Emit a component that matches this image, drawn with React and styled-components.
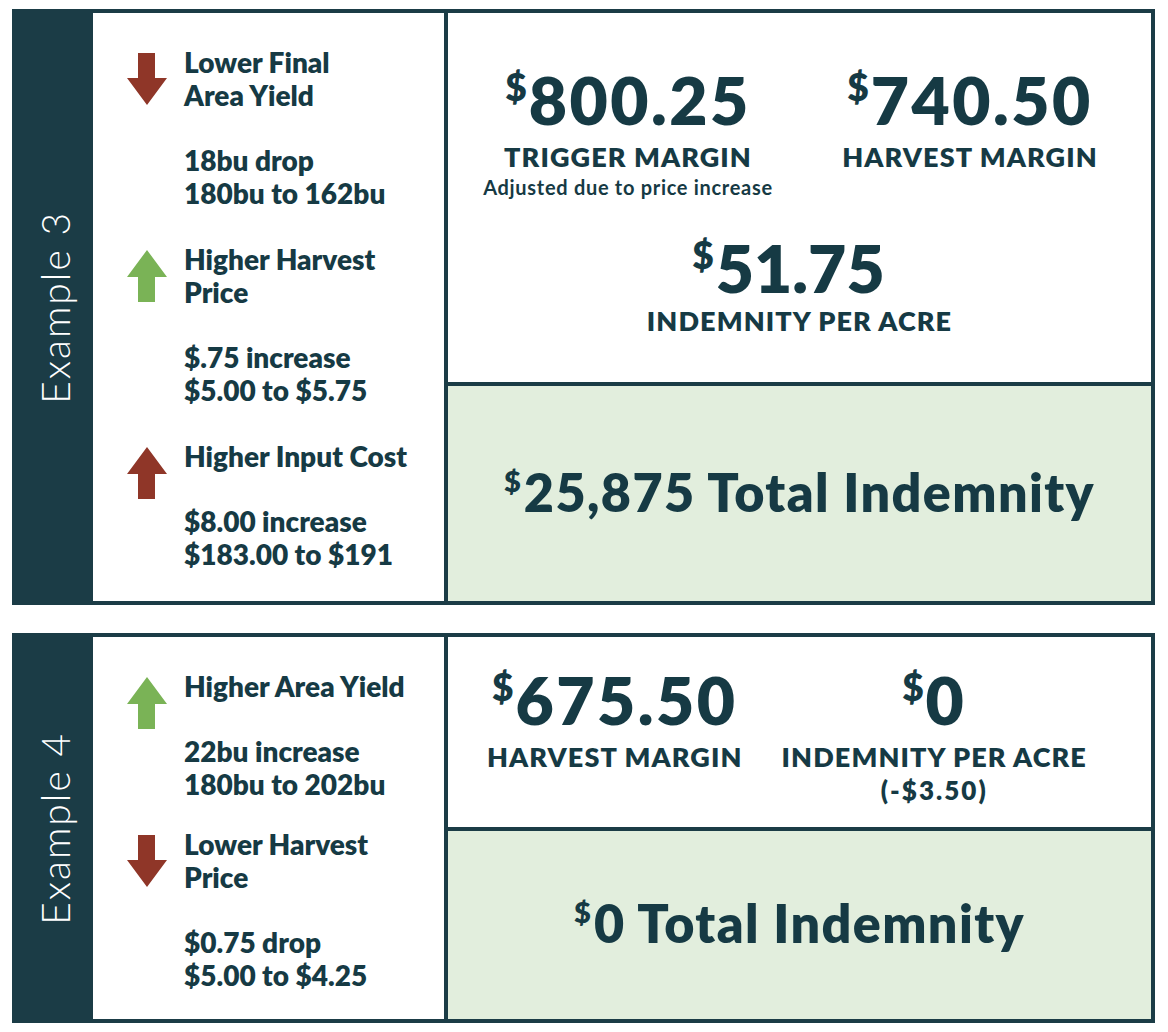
import React from 'react';
import styled, { createGlobalStyle } from 'styled-components';

const C = {
  dark: '#1b3c46',
  text: '#163a44',
  green: '#e2eedd',
  red: '#8f3628',
  up: '#7ab356',
};

const Global = createGlobalStyle`
  html, body { margin: 0; padding: 0; background: #ffffff; }
  body {
    font-family: 'Lato', 'Liberation Sans', sans-serif;
    color: ${C.text};
    -webkit-font-smoothing: antialiased;
  }
`;

const Page = styled.main`
  width: 1143px;
  padding: 9px 13px 9px 12px;
  display: flex;
  flex-direction: column;
  gap: 28px;
`;

const Card = styled.section`
  display: grid;
  grid-template-columns: 77px 351px 707px;
  border: 4px solid ${C.dark};
`;

const Sidebar = styled.div`
  background: ${C.dark};
  display: flex;
  align-items: center;
  justify-content: center;
`;

const SideLabel = styled.span`
  writing-mode: vertical-rl;
  transform: rotate(180deg);
  color: #ffffff;
  font-family: 'Lato', sans-serif;
  font-weight: 300;
  font-size: 39px;
  line-height: 40px;
  letter-spacing: 2px;
  white-space: nowrap;
`;

const Changes = styled.div`
  padding: 33px 0 0 34px;
  display: flex;
  flex-direction: column;
  gap: ${(p) => p.$gap}px;
  background: #ffffff;
`;

const Change = styled.div`
  display: grid;
  grid-template-columns: 40px 1fr;
  column-gap: 17px;
  align-items: start;
`;

const ArrowBox = styled.svg`
  display: block;
  width: 40px;
  height: 52px;
  margin-top: 7px;
`;

const ChangeText = styled.div`
  font-size: 28px;
  line-height: 33px;
  font-weight: 800;
  letter-spacing: 0;
  white-space: nowrap;
`;

const Line = styled.div``;

const Detail = styled.div`
  margin-top: 32px;
`;

const Results = styled.div`
  display: flex;
  flex-direction: column;
  border-left: 4px solid ${C.dark};
`;

const Summary = styled.div`
  box-sizing: border-box;
  height: ${(p) => p.$height}px;
  padding-top: ${(p) => p.$pad}px;
  border-bottom: 4px solid ${C.dark};
  background: #ffffff;
`;

const MetricRow = styled.div`
  display: grid;
  grid-template-columns: 1fr 1fr;
  padding: 0 ${(p) => p.$pr}px 0 ${(p) => p.$pl}px;
`;

const Metric = styled.div`
  display: flex;
  flex-direction: column;
  align-items: center;
  text-align: center;
  white-space: nowrap;
  margin-top: ${(p) => p.$top || 0}px;
`;

const Value = styled.div`
  display: flex;
  align-items: flex-start;
  font-size: 66px;
  line-height: 66px;
  font-weight: 800;
  letter-spacing: ${(p) => p.$ls}px;
  margin-right: ${(p) => p.$shift}px;
`;

const Cur = styled.span`
  font-size: 37px;
  line-height: 37px;
  margin-top: 1px;
  letter-spacing: 0;
  margin-right: 2px;
`;

const Label = styled.div`
  font-size: 27px;
  line-height: 30px;
  font-weight: 800;
  letter-spacing: 1.1px;
  margin-top: ${(p) => p.$gap}px;
`;

const Sub = styled.div`
  font-size: ${(p) => p.$size}px;
  line-height: ${(p) => p.$lh}px;
  font-weight: ${(p) => p.$weight};
  letter-spacing: ${(p) => p.$ls}px;
  margin-top: 3px;
`;

const TotalBox = styled.div`
  height: ${(p) => p.$height}px;
  background: ${C.green};
  display: flex;
  align-items: center;
  justify-content: center;
`;

const Total = styled.div`
  display: flex;
  align-items: flex-start;
  font-size: 52px;
  line-height: 52px;
  font-weight: 800;
  letter-spacing: 1.4px;
  white-space: nowrap;
  margin-top: -4px;
`;

const TotalCur = styled.span`
  font-size: 29px;
  line-height: 29px;
  letter-spacing: 0;
  margin-right: 3px;
`;

function Arrow({ dir }) {
  const down = dir === 'down';
  return (
    <ArrowBox viewBox="0 0 40 52" aria-hidden="true">
      {down ? (
        <polygon fill={C.red} points="11,0 28,0 28,25 40,25 20,52 0,25 11,25" />
      ) : (
        <polygon
          fill={dir === 'up-red' ? C.red : C.up}
          points="20,0 40,27 28,27 28,52 11,52 11,27 0,27"
        />
      )}
    </ArrowBox>
  );
}

function ChangeItem({ dir, title, detail }) {
  return (
    <Change>
      <Arrow dir={dir} />
      <ChangeText>
        {title.map((t) => (
          <Line key={t}>{t}</Line>
        ))}
        <Detail>
          {detail.map((t) => (
            <Line key={t}>{t}</Line>
          ))}
        </Detail>
      </ChangeText>
    </Change>
  );
}

function Money({ amount, ls = 2.5, shift = 0 }) {
  return (
    <Value $ls={ls} $shift={shift}>
      <Cur>$</Cur>
      {amount}
    </Value>
  );
}

export default function App() {
  return (
    <>
      <Global />
      <Page>
        <Card>
          <Sidebar>
            <SideLabel>Example 3</SideLabel>
          </Sidebar>
          <Changes $gap={33}>
            <ChangeItem
              dir="down"
              title={['Lower Final', 'Area Yield']}
              detail={['18bu drop', '180bu to 162bu']}
            />
            <ChangeItem
              dir="up"
              title={['Higher Harvest', 'Price']}
              detail={['$.75 increase', '$5.00 to $5.75']}
            />
            <ChangeItem
              dir="up-red"
              title={['Higher Input Cost']}
              detail={['$8.00 increase', '$183.00 to $191']}
            />
          </Changes>
          <Results>
            <Summary $height={373} $pad={54}>
              <MetricRow $pl={9} $pr={10}>
                <Metric>
                  <Money amount="800.25" />
                  <Label $gap={9}>TRIGGER MARGIN</Label>
                  <Sub $size={20} $lh={24} $weight={700} $ls={0.7}>
                    Adjusted due to price increase
                  </Sub>
                </Metric>
                <Metric>
                  <Money amount="740.50" />
                  <Label $gap={9}>HARVEST MARGIN</Label>
                </Metric>
              </MetricRow>
              <Metric $top={36}>
                <Money amount="51.75" ls={0} shift={22} />
                <Label $gap={5}>INDEMNITY PER ACRE</Label>
              </Metric>
            </Summary>
            <TotalBox $height={215}>
              <Total>
                <TotalCur>$</TotalCur>25,875 Total Indemnity
              </Total>
            </TotalBox>
          </Results>
        </Card>

        <Card>
          <Sidebar>
            <SideLabel>Example 4</SideLabel>
          </Sidebar>
          <Changes $gap={27}>
            <ChangeItem
              dir="up"
              title={['Higher Area Yield']}
              detail={['22bu increase', '180bu to 202bu']}
            />
            <ChangeItem
              dir="down"
              title={['Lower Harvest', 'Price']}
              detail={['$0.75 drop', '$5.00 to $4.25']}
            />
          </Changes>
          <Results>
            <Summary $height={194} $pad={30}>
              <MetricRow $pl={7} $pr={57}>
                <Metric>
                  <Money amount="675.50" />
                  <Label $gap={9}>HARVEST MARGIN</Label>
                </Metric>
                <Metric>
                  <Money amount="0" />
                  <Label $gap={9}>INDEMNITY PER ACRE</Label>
                  <Sub $size={26} $lh={30} $weight={800} $ls={2}>
                    (-$3.50)
                  </Sub>
                </Metric>
              </MetricRow>
            </Summary>
            <TotalBox $height={188}>
              <Total>
                <TotalCur>$</TotalCur>0 Total Indemnity
              </Total>
            </TotalBox>
          </Results>
        </Card>
      </Page>
    </>
  );
}
